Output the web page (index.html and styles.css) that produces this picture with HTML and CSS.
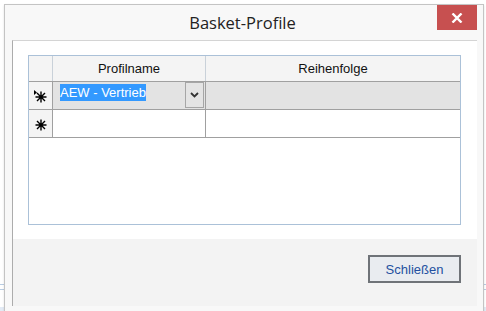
FILE: index.html
```html
<!DOCTYPE html>
<html lang="de">
<head>
    <meta charset="UTF-8">
    <title>Basket-Profile</title>
    <link rel="stylesheet" href="styles.css">
</head>
<body>
    <div class="window">
        <div class="titlebar">
            <span></span>
            <span class="title">Basket-Profile</span>
            <button class="close-btn">
                <svg width="12" height="10" viewBox="0 0 12 10">
                    <path d="M1.5 0.5 L10.5 9.5 M10.5 0.5 L1.5 9.5" stroke="#fff" stroke-width="2.4"/>
                </svg>
            </button>
        </div>

        <div class="client">
            <div class="content">
                <div class="grid">
                    <table>
                        <tr class="head">
                            <th class="rowhead"></th>
                            <th class="col-name">Profilname</th>
                            <th>Reihenfolge</th>
                        </tr>
                        <tr class="selected">
                            <td class="rowhead">
                                <svg width="14" height="14" viewBox="0 0 14 14">
                                    <path d="M1 1 L4 3.5 L1 6 Z" fill="#000"/>
                                    <path d="M8 2.5 V13.5 M2.5 8 H13.5 M4 4 L12 12 M12 4 L4 12" stroke="#000" stroke-width="1.4"/>
                                </svg>
                            </td>
                            <td class="col-name">
                                <div class="combo">
                                    <span class="combo-text"><span class="sel">AEW - Vertrieb</span></span>
                                    <span class="combo-btn">
                                        <svg width="9" height="6" viewBox="0 0 9 6">
                                            <path d="M1 1 L4.5 4.5 L8 1" stroke="#333" stroke-width="1.8" fill="none"/>
                                        </svg>
                                    </span>
                                </div>
                            </td>
                            <td></td>
                        </tr>
                        <tr>
                            <td class="rowhead">
                                <svg width="14" height="14" viewBox="0 0 14 14">
                                    <path d="M8 2.5 V13.5 M2.5 8 H13.5 M4 4 L12 12 M12 4 L4 12" stroke="#000" stroke-width="1.4"/>
                                </svg>
                            </td>
                            <td class="col-name"></td>
                            <td></td>
                        </tr>
                    </table>
                </div>
            </div>

            <div class="footer">
                <button class="close-dialog">Schließen</button>
            </div>
        </div>
    </div>
</body>
</html>
```

FILE: styles.css
```css
body {
    margin: 0;
    padding: 0;
    height: 311px;
    background: linear-gradient(to bottom, #fff 0, #fff 284px, #b9cde3 284px, #b9cde3 285px, #fff 285px, #fff 289px, #b9cde3 289px, #b9cde3 290px, #fff 290px, #fff 307px, #e3ebf5 307px);
    font-family: 'Liberation Sans', Arial, sans-serif;
    overflow: hidden;
}

.window {
    margin: 4px 0 0 4px;
    width: 465px;
    height: 301px;
    border: 1px solid #c4c4c4;
    background-color: #f8f8f8;
    display: flex;
    flex-direction: column;
    padding: 0 6px 6px 7px;
    box-sizing: content-box;
    box-shadow: 0 1px 2px rgba(0, 0, 0, 0.12);
}

.titlebar {
    height: 35px;
    display: grid;
    grid-template-columns: 1fr auto 1fr;
    align-items: start;
}

.title {
    font-family: 'Open Sans', 'Noto Sans', sans-serif;
    font-size: 16.5px;
    color: #222;
    line-height: 35px;
    padding-right: 4px;
}

.close-btn {
    justify-self: end;
    width: 40px;
    height: 25px;
    border: none;
    padding: 0;
    margin: 0;
    background-color: #c75050;
    display: flex;
    align-items: center;
    justify-content: center;
}

.client {
    flex: 1;
    display: flex;
    flex-direction: column;
    border-left: 1px solid #acacac;
    border-top: 1px solid #d4d4d4;
}

.content {
    background-color: #fff;
    padding: 14px 16px 14px 15px;
}

.grid {
    height: 168px;
    border: 1px solid #abc1d8;
    background-color: #fff;
}

.grid table {
    border-collapse: collapse;
    width: 100%;
    table-layout: fixed;
    font-size: 13px;
    color: #000;
}

.grid th {
    height: 25px;
    padding: 0;
    font-weight: normal;
    background-color: #f4f4f4;
    border-right: 1px solid #c9d1d9;
    border-bottom: 1px solid #a0a0a0;
    text-align: center;
    color: #111;
}

.grid th:last-child,
.grid td:last-child {
    border-right: none;
}

.grid td {
    height: 27px;
    padding: 0;
    border-right: 1px solid #a0a0a0;
    border-bottom: 1px solid #a0a0a0;
}

.grid .rowhead {
    width: 23px;
    background-color: #f4f4f4;
    text-align: center;
}

.grid td.rowhead svg {
    display: block;
    margin: 1px 0 0 4px;
}

.grid .col-name {
    width: 152px;
}

.selected td {
    background-color: #e3e3e3;
}

.selected td.rowhead {
    background-color: #f4f4f4;
}

.combo {
    display: flex;
    height: 27px;
    align-items: stretch;
}

.combo-text {
    flex: 1;
    padding: 3px 0 0 7px;
    font-size: 13px;
}

.combo-text .sel {
    background-color: #3399ff;
    color: #fff;
    padding: 1px 0;
}

.combo-btn {
    width: 17px;
    margin: 0 1px 1px 0;
    border: 1px solid #a6a6a6;
    background-color: #e4e4e4;
    display: flex;
    align-items: center;
    justify-content: center;
}

.footer {
    flex: 1;
    background-color: #f3f3f3;
    display: flex;
    justify-content: flex-end;
    align-items: flex-start;
    padding: 16px 16px 0 0;
}

.close-dialog {
    width: 93px;
    height: 28px;
    border: 2px solid #6f7378;
    background-color: #e9ecf0;
    font-family: 'Liberation Sans', Arial, sans-serif;
    font-size: 13px;
    color: #2350a0;
    padding: 0;
}
```
